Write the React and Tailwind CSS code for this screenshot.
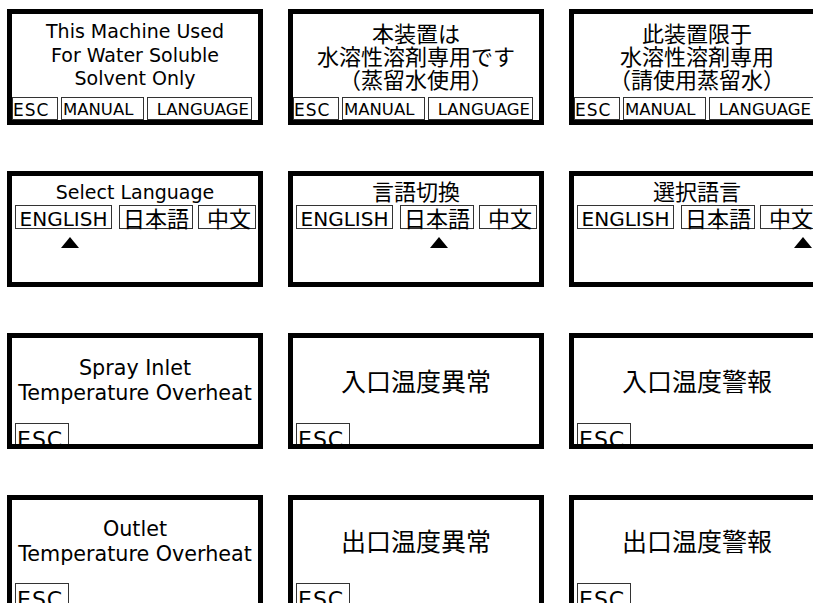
import React from "react";

function Panel({ children }) {
  return (
    <div className="relative flex h-[116px] w-[256px] flex-col overflow-hidden border-[5px] border-black bg-white text-black">
      {children}
    </div>
  );
}

function BottomBar() {
  return (
    <div className="mt-auto flex h-[23px] shrink-0 gap-[3px] font-['DejaVu_Sans',sans-serif] text-[16.5px] leading-[20px] text-black">
      <div className="h-[23px] w-[46px] shrink-0 border-[1.5px] border-[#333] pt-[2px] text-[17px] tracking-[1px]">ESC</div>
      <div className="h-[23px] w-[83px] shrink-0 border-[1.5px] border-[#333] pl-[1px] pt-[2px]">MANUAL</div>
      <div className="h-[23px] w-[105px] shrink-0 border-[1.5px] border-[#333] pr-[2px] pt-[2px] text-right">LANGUAGE</div>
    </div>
  );
}

function IntroEn() {
  return (
    <Panel>
      <div className="shrink-0 pt-[6px] text-center font-['DejaVu_Sans',sans-serif] text-[19px] leading-[23.5px]">
        <div>This Machine Used</div>
        <div>For Water Soluble</div>
        <div>Solvent Only</div>
      </div>
      <BottomBar />
    </Panel>
  );
}

function IntroCjk({ lines }) {
  return (
    <Panel>
      <div className="shrink-0 pt-[7px] text-center font-['Noto_Sans_CJK_JP',sans-serif] text-[22px] leading-[23px]">
        {lines.map((l) => (
          <div key={l} className="whitespace-nowrap">{l}</div>
        ))}
      </div>
      <BottomBar />
    </Panel>
  );
}

function Triangle() {
  return (
    <svg width="18" height="11" viewBox="0 0 18 11">
      <polygon points="9,0 18,11 0,11" fill="#000" />
    </svg>
  );
}

function LangButtons() {
  return (
    <div className="flex h-[24px] shrink-0">
      <div className="ml-[3px] h-[24px] w-[97px] shrink-0 border-[1.5px] border-[#333] pt-[3px] text-center font-['DejaVu_Sans',sans-serif] text-[20px] leading-[20px]">
        ENGLISH
      </div>
      <div className="ml-[7px] flex h-[24px] w-[74px] shrink-0 items-center justify-center border-[1.5px] border-[#333] font-['Noto_Sans_CJK_JP',sans-serif] text-[22px] leading-[21px]">
        日本語
      </div>
      <div className="ml-[5px] flex h-[24px] w-[58px] shrink-0 items-center justify-end border-[1.5px] border-[#333] pr-[4px] font-['Noto_Sans_CJK_JP',sans-serif] text-[22px] leading-[21px]">
        中文
      </div>
    </div>
  );
}

function LangEn() {
  return (
    <Panel>
      <div className="h-[29px] shrink-0 pt-[4px] text-center font-['DejaVu_Sans',sans-serif] text-[19px] leading-[24px]">
        Select Language
      </div>
      <LangButtons />
      <div className="ml-[49px] mt-[8px] flex shrink-0">
        <Triangle />
      </div>
    </Panel>
  );
}

function LangJp() {
  return (
    <Panel>
      <div className="h-[29px] shrink-0 pt-[2px] text-center font-['Noto_Sans_CJK_JP',sans-serif] text-[22px] leading-[24px]">
        言語切換
      </div>
      <LangButtons />
      <div className="ml-[137px] mt-[8px] flex shrink-0">
        <Triangle />
      </div>
    </Panel>
  );
}

function LangCn() {
  return (
    <Panel>
      <div className="h-[29px] shrink-0 pt-[2px] text-center font-['Noto_Sans_CJK_JP',sans-serif] text-[22px] leading-[24px]">
        選択語言
      </div>
      <LangButtons />
      <div className="ml-[220px] mt-[8px] flex shrink-0">
        <Triangle />
      </div>
    </Panel>
  );
}

function EscBox() {
  return (
    <div className="ml-[3px] h-[26px] w-[54px] shrink-0 border-[1.5px] border-[#333] pl-[1px] pt-[5px] font-['DejaVu_Sans',sans-serif] text-[22px] leading-[22px] tracking-[1px]">
      ESC
    </div>
  );
}

function AlarmEn3() {
  return (
    <Panel>
      <div className="h-[68px] shrink-0 whitespace-nowrap pt-[18px] text-center font-['DejaVu_Sans',sans-serif] text-[20.7px] leading-[25px]">
        <div>Spray Inlet</div>
        <div>Temperature Overheat</div>
      </div>
      <div className="mt-[17px] shrink-0">
        <EscBox />
      </div>
    </Panel>
  );
}

function AlarmEn4() {
  return (
    <Panel>
      <div className="h-[67px] shrink-0 whitespace-nowrap pt-[17px] text-center font-['DejaVu_Sans',sans-serif] text-[20.7px] leading-[25px]">
        <div>Outlet</div>
        <div>Temperature Overheat</div>
      </div>
      <div className="mt-[16px] shrink-0">
        <EscBox />
      </div>
    </Panel>
  );
}

function AlarmCjk3({ text }) {
  return (
    <Panel>
      <div className="h-[57px] shrink-0 pt-[27px] text-center font-['Noto_Sans_CJK_JP',sans-serif] text-[25px] leading-[30px]">
        {text}
      </div>
      <div className="mt-[28px] shrink-0">
        <EscBox />
      </div>
    </Panel>
  );
}

function AlarmCjk4({ text }) {
  return (
    <Panel>
      <div className="h-[55px] shrink-0 pt-[25px] text-center font-['Noto_Sans_CJK_JP',sans-serif] text-[25px] leading-[30px]">
        {text}
      </div>
      <div className="mt-[28px] shrink-0">
        <EscBox />
      </div>
    </Panel>
  );
}

export default function App() {
  return (
    <div className="h-[603px] w-[813px] overflow-hidden bg-white">
      <div className="grid w-max grid-cols-[256px_256px_256px] gap-x-[25px] gap-y-[46px] pl-[7px] pt-[9px]">
        <IntroEn />
        <IntroCjk lines={["本装置は", "水溶性溶剤専用です", "（蒸留水使用）"]} />
        <IntroCjk lines={["此装置限于", "水溶性溶剤専用", "（請使用蒸留水）"]} />

        <LangEn />
        <LangJp />
        <LangCn />

        <AlarmEn3 />
        <AlarmCjk3 text="入口温度異常" />
        <AlarmCjk3 text="入口温度警報" />

        <AlarmEn4 />
        <AlarmCjk4 text="出口温度異常" />
        <AlarmCjk4 text="出口温度警報" />
      </div>
    </div>
  );
}
